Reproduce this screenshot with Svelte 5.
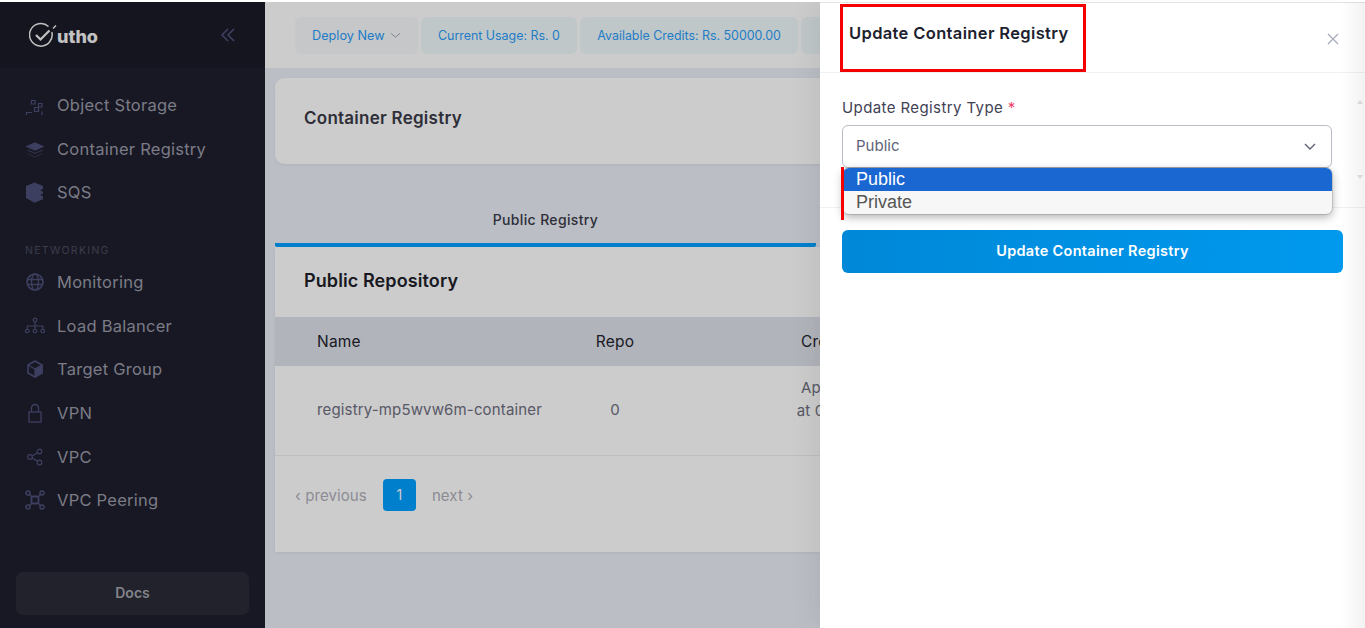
<script>
  const groupA = [
    { label: 'Object Storage', icon: 'storage' },
    { label: 'Container Registry', icon: 'layers' },
    { label: 'SQS', icon: 'sqs' }
  ];
  const groupB = [
    { label: 'Monitoring', icon: 'globe' },
    { label: 'Load Balancer', icon: 'tree' },
    { label: 'Target Group', icon: 'cube' },
    { label: 'VPN', icon: 'lock' },
    { label: 'VPC', icon: 'share' },
    { label: 'VPC Peering', icon: 'peer' }
  ];
</script>

{#snippet icon(name)}
  <svg class="nav-icon" viewBox="0 0 20 20" fill="none" stroke="currentColor" stroke-width="1.2" aria-hidden="true">
    {#if name === 'storage'}
      <path d="M6.500 5.500h3.500v3.500h-3.500zM9.500 12.500h4v4h-4zM13.500 8.500h3.500v3.500h-3.500zM1.500 20v-2.500h5.500M17 16.500v3.500" />
    {:else if name === 'layers'}
      <path d="M10 4l8 3.500-8 3.500-8-3.500z" fill="currentColor" />
      <path d="M2.500 10.500l7.500 3.200 7.500-3.200v1.300l-7.500 3.200-7.500-3.200z" fill="currentColor" stroke="none" opacity=".65" />
      <path d="M2.500 14l7.500 3.200 7.500-3.200v1.200l-7.500 3.200-7.500-3.200z" fill="currentColor" stroke="none" opacity=".4" />
    {:else if name === 'sqs'}
      <path d="M9.500 .5l8.500 3.500v3l-3 1.300 3 1.400v1.800l-3 1.400 3 1.300v3l-8.500 3.500L1 16V4z" fill="currentColor" stroke="none" />
    {:else if name === 'globe'}
      <circle cx="10" cy="10" r="8" stroke-width="1.600" />
      <ellipse cx="10" cy="10" rx="3.500" ry="8" stroke-width="1.400" />
      <path d="M2.500 7.500h15M2.500 12.500h15" stroke-width="1.400" />
    {:else if name === 'tree'}
      <circle cx="10" cy="4" r="1.800" />
      <rect x="0.500" y="13.500" width="3.500" height="3" rx="1" />
      <rect x="8.200" y="13.500" width="3.500" height="3" rx="1" />
      <rect x="16" y="13.500" width="3.500" height="3" rx="1" />
      <path d="M10 6v7.500M2.200 13.500V10h15.600v3.500" />
    {:else if name === 'cube'}
      <path d="M10 2l7 4v8l-7 4-7-4V6z" stroke-width="1.600" />
      <path d="M10 10l7-4v8l-7 4z" fill="currentColor" />
      <path d="M3 6l7 4" />
    {:else if name === 'lock'}
      <rect x="4" y="9" width="12" height="10" stroke-width="1.300" />
      <path d="M6.500 9V5a3.500 3.500 0 017 0v4" stroke-width="1.300" />
    {:else if name === 'share'}
      <circle cx="5" cy="10" r="2.300" />
      <circle cx="14.500" cy="4.500" r="2.300" />
      <circle cx="14.500" cy="15.500" r="2.300" />
      <path d="M7 9l5.500-3.300M7 11l5.500 3.300" />
    {:else}
      <rect x="6.500" y="6.500" width="7" height="7" rx="1.500" stroke-width="1.800" />
      <circle cx="3" cy="3" r="2" stroke-width="1.500" />
      <circle cx="17" cy="3" r="2" stroke-width="1.500" />
      <circle cx="3" cy="17" r="2" stroke-width="1.500" />
      <circle cx="17" cy="17" r="2" stroke-width="1.500" />
      <path d="M4.500 4.500l2.500 2.500M15.500 4.500L13 7M4.500 15.500L7 13M15.500 15.500L13 13" stroke-width="1.500" />
    {/if}
  </svg>
{/snippet}

{#snippet navItem(item)}
  <a class="nav-item" href="#top">
    <span class="icon-slot">{@render icon(item.icon)}</span>
    <span>{item.label}</span>
  </a>
{/snippet}

<div class="app" id="top">
  <aside class="sidebar">
    <div class="brand">
      <div class="logo">
        <svg viewBox="0 0 28 26" width="28" height="26" fill="none" stroke="#f2f2f2" aria-hidden="true">
          <path d="M19.500 4.500A11.300 11.300 0 1 0 22.800 10" stroke-width="1.500" />
          <path d="M7 13l4.500 4.500 9-9" stroke-width="2.200" />
          <path d="M24 6.500l3-3" stroke-width="1.500" />
        </svg>
        <span>utho</span>
      </div>
      <svg class="collapse" viewBox="0 0 14 14" width="14" height="14" fill="none" stroke="currentColor" stroke-width="1.500" aria-hidden="true">
        <path d="M7 1L1 7l6 6M13 1L7 7l6 6" />
      </svg>
    </div>

    <nav class="nav">
      <div class="nav-group">
        {#each groupA as item}{@render navItem(item)}{/each}
      </div>
      <div class="nav-title">NETWORKING</div>
      <div class="nav-group">
        {#each groupB as item}{@render navItem(item)}{/each}
      </div>
    </nav>

    <div class="docs-wrap">
      <div class="docs">Docs</div>
    </div>
  </aside>

  <main class="main">
    <header class="topbar">
      <div class="chip chip-plain">Deploy New
        <svg viewBox="0 0 12 8" width="11" height="7" fill="none" stroke="#9aa1ad" stroke-width="1.100" aria-hidden="true"><path d="M1 1.500l5 4.500 5-4.500" /></svg>
      </div>
      <div class="chip">Current Usage: Rs. 0</div>
      <div class="chip">Available Credits: Rs. 50000.00</div>
      <div class="chip chip-rest"></div>
    </header>

    <section class="content">
      <div class="card title-card">Container Registry</div>

      <div class="tabs">
        <div class="tab active">Public Registry</div>
      </div>

      <div class="card table-card">
        <h2>Public Repository</h2>
        <div class="row head">
          <span class="c-name">Name</span>
          <span class="c-repo">Repo</span>
          <span class="c-date">Created</span>
        </div>
        <div class="row body">
          <span class="c-name">registry-mp5wvw6m-container</span>
          <span class="c-repo">0</span>
          <span class="c-date">April 12, 2024<br />at 03:15:42 PM</span>
        </div>
        <div class="pager">
          <span class="pg-link">‹ previous</span>
          <span class="pg-current">1</span>
          <span class="pg-link">next ›</span>
        </div>
      </div>
    </section>
  </main>

  <div class="overlay"></div>

  <aside class="drawer">
    <div class="drawer-head">
      <h3>Update Container Registry</h3>
      <svg class="close" viewBox="0 0 12 12" width="12" height="12" fill="none" stroke="currentColor" stroke-width="1.300" aria-hidden="true"><path d="M1 1l10 10M11 1L1 11" /></svg>
      <div class="mark mark-box"></div>
    </div>
    <div class="form">
      <div class="label">Update Registry Type <span class="req">*</span></div>
      <div class="select">
        <span>Public</span>
        <svg viewBox="0 0 12 8" width="12" height="8" fill="none" stroke="#5e6278" stroke-width="1.400" aria-hidden="true"><path d="M1 1l5 5 5-5" /></svg>
        <div class="menu">
          <div class="opt selected">Public</div>
          <div class="opt">Private</div>
        </div>
        <div class="mark mark-line"></div>
      </div>
    </div>
    <div class="actions">
      <div class="submit">Update Container Registry</div>
    </div>
    <span class="arrow arrow-up"></span>
    <span class="arrow arrow-down"></span>
  </aside>
</div>

<style>
  :global(body) {
    margin: 0;
    background: #fff;
  }
  .app {
    position: relative;
    display: flex;
    width: 1365px;
    height: 626px;
    margin-top: 2px;
    overflow: hidden;
    font-family: Inter, "Liberation Sans", sans-serif;
  }
  .sidebar {
    flex: 0 0 265px;
    display: flex;
    flex-direction: column;
    background: #1e1f2d;
    color: #9a9aa8;
  }
  .brand {
    flex: 0 0 66px;
    display: flex;
    align-items: center;
    justify-content: space-between;
    padding: 0 30px 0 29px;
    background: #1a1b27;
  }
  .logo {
    display: flex;
    align-items: center;
    color: #f4f4f4;
    font-size: 18px;
    font-weight: 800;
  }
  .logo span {
    padding-top: 2px;
  }
  .collapse {
    color: #50527c;
  }
  .nav {
    flex: 1;
    min-height: 0;
    overflow: hidden;
    padding-top: 15px;
  }
  .nav-group {
    display: flex;
    flex-direction: column;
  }
  .nav-item {
    display: flex;
    align-items: center;
    height: 43.700px;
    padding-left: 25px;
    color: inherit;
    text-decoration: none;
    font-size: 16.500px;
    letter-spacing: 0.25px;
  }
  .icon-slot {
    flex: 0 0 32px;
    display: flex;
    color: #4d4f78;
  }
  .nav-icon {
    width: 20px;
    height: 20px;
    overflow: visible;
  }
  .nav-title {
    margin: 30px 0 2px 25px;
    height: 14px;
    line-height: 14px;
    font-size: 10.500px;
    letter-spacing: 1.300px;
    color: #4a4b60;
  }
  .docs-wrap {
    padding: 0 16px 13px;
    margin-top: 26px;
  }
  .docs {
    height: 43px;
    line-height: 42px;
    text-align: center;
    border-radius: 7px;
    background: #2a2b38;
    color: #a5a5ad;
    font-size: 14px;
    font-weight: 600;
  }
  .main {
    flex: 1;
    min-width: 0;
    background: #eaeef6;
  }
  .topbar {
    height: 66px;
    display: flex;
    align-items: center;
    gap: 3.500px;
    padding-left: 30px;
    background: #fff;
  }
  .chip {
    height: 37px;
    line-height: 37px;
    padding: 0 17px;
    border-radius: 6px;
    background: #f0f9fc;
    color: #2a9cf8;
    font-size: 12.400px;
    white-space: nowrap;
  }
  .chip-plain {
    display: flex;
    align-items: center;
    gap: 5px;
    background: #f7f9fb;
    font-size: 12.700px;
  }
  .chip-rest {
    flex: 0 0 60px;
  }
  .content {
    padding: 10px 0 0 10px;
  }
  .card {
    background: #fff;
    width: 1000px;
    box-shadow: 0 1px 3px rgba(60, 70, 90, 0.08);
  }
  .title-card {
    height: 86px;
    line-height: 80px;
    padding-left: 29px;
    box-sizing: border-box;
    border-radius: 9px 0 0 9px;
    color: #3a3a48;
    font-size: 17px;
    font-weight: 600;
    letter-spacing: 0.25px;
  }
  .tabs {
    display: flex;
    margin-top: 26px;
    height: 57px;
  }
  .tab {
    flex: 0 0 541px;
    box-sizing: border-box;
    padding-top: 21px;
    text-align: center;
    color: #3a3a48;
    font-size: 14px;
    font-weight: 500;
    letter-spacing: 0.35px;
  }
  .tab.active {
    border-bottom: 4px solid #00a0ff;
    border-radius: 0 0 2px 2px;
  }
  .table-card {
    height: 305px;
    margin-top: 0;
  }
  .table-card h2 {
    margin: 0;
    height: 70px;
    line-height: 68px;
    padding-left: 29px;
    color: #1e1e2a;
    font-size: 18px;
    font-weight: 600;
    letter-spacing: 0.1px;
  }
  .row {
    display: flex;
    align-items: center;
    padding-left: 42px;
    font-size: 15px;
  }
  .row.head {
    height: 49px;
    background: #dfe2ea;
    color: #22222e;
    font-size: 15.500px;
    letter-spacing: 0.2px;
  }
  .row.body {
    height: 89px;
    color: #6e6e80;
    border-bottom: 1px solid #eeeeee;
    letter-spacing: 0.15px;
  }
  .row.body span {
    position: relative;
    top: -1px;
  }
  .c-name {
    flex: 0 0 258px;
  }
  .c-repo {
    flex: 0 0 80px;
    text-align: center;
  }
  .c-date {
    flex: 0 0 392px;
    line-height: 23px;
  }
  .head .c-date {
    padding-left: 146px;
    box-sizing: border-box;
  }
  .body .c-date {
    align-self: flex-start;
    margin-top: 11px;
    text-align: center;
  }
  .pager {
    display: flex;
    align-items: center;
    gap: 16px;
    padding: 23px 0 0 20px;
    font-size: 15px;
    letter-spacing: 0.1px;
    color: #b0b0ba;
  }
  .pg-current {
    width: 33px;
    height: 32px;
    line-height: 32px;
    text-align: center;
    border-radius: 4px;
    background: #00a0ff;
    color: #fff;
    font-size: 14px;
  }
  .overlay {
    position: absolute;
    inset: 0;
    background: rgba(0, 0, 0, 0.2);
  }
  .drawer {
    position: absolute;
    top: 0;
    right: 0;
    bottom: 0;
    width: 545px;
    background: #fff;
    box-shadow: 0 0 30px rgba(0, 0, 0, 0.1);
  }
  .drawer::after {
    content: "";
    position: absolute;
    top: 0;
    right: 0;
    bottom: 0;
    width: 24px;
    background: linear-gradient(90deg, rgba(0, 0, 0, 0), rgba(0, 0, 0, 0.05));
    pointer-events: none;
  }
  .drawer-head {
    position: relative;
    height: 70px;
    border-bottom: 1px solid #eff2f5;
    box-shadow: inset 0 1px 0 #e4e4e4;
  }
  .drawer-head h3 {
    margin: 0;
    position: absolute;
    left: 29px;
    top: 21px;
    color: #20212e;
    font-size: 16.500px;
    font-weight: 600;
    letter-spacing: 0.35px;
  }
  .close {
    position: absolute;
    left: 507px;
    top: 31px;
    color: #a8acbc;
  }
  .mark {
    position: absolute;
    background: #f40000;
  }
  .mark-box {
    left: 20px;
    top: 2px;
    width: 240px;
    height: 62px;
    background: none;
    border: 3px solid #f50000;
  }
  .mark-line {
    left: -2px;
    top: 41px;
    width: 3px;
    height: 53px;
  }
  .form {
    height: 135px;
    box-sizing: border-box;
    padding: 24px 33px 0 22px;
    border-bottom: 1px solid #eff2f5;
  }
  .label {
    color: #3f4254;
    font-size: 15px;
    letter-spacing: 0.4px;
    height: 28px;
    line-height: 21px;
  }
  .req {
    color: #f1416c;
  }
  .select {
    position: relative;
    display: flex;
    align-items: center;
    justify-content: space-between;
    height: 41px;
    padding: 0 15px 0 13px;
    border: 1px solid #b9bcc4;
    border-radius: 6px;
    color: #5e6278;
    font-size: 15px;
  }
  .select > span {
    position: relative;
    top: -1px;
  }
  .menu {
    position: absolute;
    left: 0;
    right: -1px;
    top: 42px;
    overflow: hidden;
    border-radius: 6px;
    background: #f7f7f7;
    box-shadow: 0 0 0 1px rgba(0, 0, 0, 0.12), 0 3px 10px rgba(0, 0, 0, 0.32);
    font-family: "Liberation Sans", Arial, sans-serif;
    font-size: 18px;
    color: #555;
  }
  .opt {
    height: 23px;
    line-height: 22px;
    padding-left: 13px;
  }
  .opt.selected {
    background: #1a67d2;
    color: #fff;
  }
  .actions {
    padding: 22px 22px 0;
  }
  .submit {
    height: 43px;
    line-height: 42px;
    text-align: center;
    border-radius: 6px;
    background: linear-gradient(90deg, #0088d8, #0099ee);
    color: #fff;
    font-size: 14.500px;
    font-weight: 600;
    letter-spacing: 0.3px;
  }
  .arrow {
    position: absolute;
    right: 2px;
    width: 0;
    height: 0;
    border-left: 3px solid transparent;
    border-right: 3px solid transparent;
  }
  .arrow-up {
    top: 98px;
    border-bottom: 4px solid #e2e2e6;
  }
  .arrow-down {
    top: 173px;
    border-top: 4px solid #e2e2e6;
  }
</style>
